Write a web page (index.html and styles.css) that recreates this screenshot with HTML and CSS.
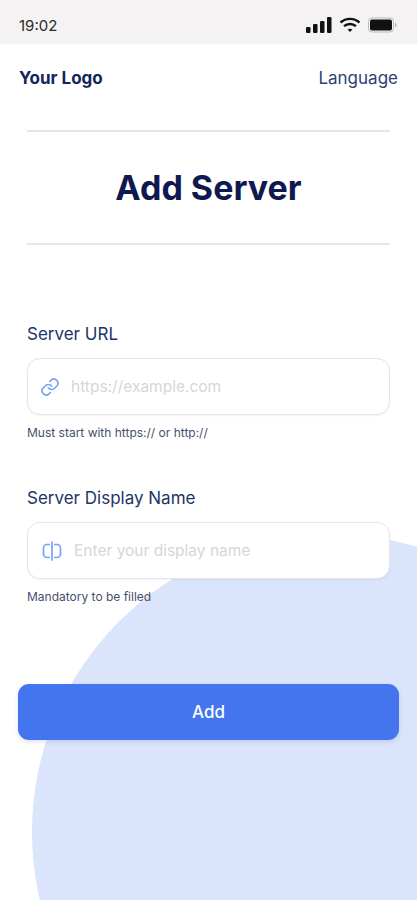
FILE: index.html
```html
<!DOCTYPE html>
<html lang="en">
<head>
    <meta charset="UTF-8">
    <meta name="viewport" content="width=device-width, initial-scale=1.0">
    <title>Add Server</title>
    <link rel="stylesheet" href="styles.css">
</head>
<body>
    <div class="bg-circle"></div>

    <div class="status-bar">
        <span class="time">19:02</span>
        <div class="status-icons">
            <svg width="26" height="16" viewBox="0 0 26 16">
                <rect x="0" y="10" width="4.5" height="6" rx="1.2" fill="#111"/>
                <rect x="7" y="7" width="4.5" height="9" rx="1.2" fill="#111"/>
                <rect x="14" y="4" width="4.5" height="12" rx="1.2" fill="#111"/>
                <rect x="21" y="0" width="4.5" height="16" rx="1.2" fill="#111"/>
            </svg>
            <svg width="22" height="16" viewBox="0 0 22 16" fill="none" stroke="#111" stroke-width="2.4">
                <path d="M1.5 5.5C7 .6 15 .6 20.5 5.5"/>
                <path d="M5 9.2c3.5-3 8.5-3 12 0"/>
                <path d="M8.6 12.6L11 15l2.4-2.4c-1.4-1-3.4-1-4.8 0z" fill="#111" stroke="none"/>
            </svg>
            <svg class="battery" width="29" height="16" viewBox="0 0 29 16">
                <rect x="0.5" y="1" width="25" height="14" rx="3.5" fill="none" stroke="#bbb"/>
                <rect x="2" y="2.5" width="22" height="11" rx="2" fill="#111"/>
                <path d="M27 5.5c1.2.4 1.8 1.4 1.8 2.5s-.6 2.1-1.8 2.5z" fill="#bbb"/>
            </svg>
        </div>
    </div>

    <div class="top-nav">
        <span class="logo">Your Logo</span>
        <span class="language">Language</span>
    </div>

    <div class="title-block">
        <h1>Add Server</h1>
    </div>

    <form class="server-form">
        <div class="field">
            <label for="server-url">Server URL</label>
            <div class="input-box">
                <svg class="input-icon link-icon" width="20" height="20" viewBox="0 0 24 24" fill="none" stroke="#7aa2f5" stroke-width="2" stroke-linecap="round" stroke-linejoin="round">
                    <path d="M10 13a5 5 0 0 0 7.5.5l3-3a5 5 0 0 0-7-7l-1.7 1.7"/>
                    <path d="M14 11a5 5 0 0 0-7.5-.5l-3 3a5 5 0 0 0 7 7l1.7-1.7"/>
                </svg>
                <input id="server-url" type="text" placeholder="https://example.com">
            </div>
            <p class="hint">Must start with https:// or http://</p>
        </div>

        <div class="field">
            <label for="server-name">Server Display Name</label>
            <div class="input-box name-box">
                <svg class="input-icon" width="20" height="20" viewBox="0 0 20 20" fill="none" stroke="#7aa2f5" stroke-width="1.7" stroke-linecap="round">
                    <rect x="1.5" y="3.5" width="17" height="13" rx="3.5"/>
                    <path d="M10 1v18" stroke="#fff" stroke-width="4"/>
                    <path d="M10 1v18"/>
                </svg>
                <input id="server-name" type="text" placeholder="Enter your display name">
            </div>
            <p class="hint">Mandatory to be filled</p>
        </div>

        <button class="add-btn" type="button">Add</button>
    </form>
</body>
</html>
```

FILE: styles.css
```css
* {
    box-sizing: border-box;
}
html, body {
    height: 900px;
}
body {
    margin: 0;
    position: relative;
    overflow: hidden;
    background-color: #fff;
    font-family: Inter, 'Liberation Sans', sans-serif;
    color: #1d2f63;
}
.bg-circle {
    position: absolute;
    left: 32px;
    top: 534px;
    width: 596px;
    height: 596px;
    border-radius: 50%;
    background-color: #dae4fb;
}
.status-bar {
    height: 44px;
    padding: 0 20px 0 19px;
    display: flex;
    align-items: center;
    justify-content: space-between;
    background-color: #f4f2f2;
    position: relative;
}
.time {
    font-size: 15px;
    color: #2b2b2b;
    margin-top: 7px;
    margin-top: 6px;
}
.status-icons {
    display: flex;
    align-items: center;
    gap: 7px;
    margin-top: 6px;
}
.top-nav {
    height: 68px;
    padding: 0 19px;
    display: flex;
    align-items: center;
    justify-content: space-between;
    position: relative;
}
.logo {
    font-size: 17px;
    font-weight: 700;
    color: #12265e;
}
.language {
    font-size: 17px;
    color: #2b4273;
}
.title-block {
    height: 115px;
    margin: 18px 27px 0;
    border-top: 2px solid #e6e6e8;
    border-bottom: 2px solid #e6e6e8;
    display: flex;
    align-items: center;
    justify-content: center;
    position: relative;
}
h1 {
    margin: 0;
    font-size: 34px;
    font-weight: 700;
    color: #10194f;
}
.server-form {
    padding: 77px 18px 0;
    position: relative;
}
.field {
    margin: 0 9px 45px;
}
.field + .field {
    margin-bottom: 79px;
}
label {
    display: block;
    height: 36px;
    font-size: 17px;
    line-height: 24px;
    color: #1d3468;
}
.input-box {
    height: 57px;
    padding: 0 12px;
    display: flex;
    align-items: center;
    gap: 11px;
    background-color: #fff;
    border: 1.5px solid #e4e5e8;
    border-radius: 13px;
    box-shadow: 0 1px 2px rgba(30, 50, 100, 0.06);
}
.name-box {
    padding-left: 14px;
    gap: 12px;
}
.input-icon {
    flex: none;
}
input {
    flex: 1;
    min-width: 0;
    border: 0;
    outline: 0;
    padding: 0;
    background: transparent;
    font-family: inherit;
    font-size: 15.5px;
}
input::placeholder {
    color: #d5d6da;
    opacity: 1;
}
.hint {
    margin: 10px 0 0;
    font-size: 12px;
    line-height: 16px;
    color: #46506e;
}
.add-btn {
    display: block;
    width: 100%;
    height: 56px;
    border: 0;
    border-radius: 11px;
    background-color: #4475ee;
    box-shadow: 0 2px 4px rgba(40, 70, 140, 0.15);
    font-family: inherit;
    font-size: 17px;
    font-weight: 500;
    color: #fff;
}
```
